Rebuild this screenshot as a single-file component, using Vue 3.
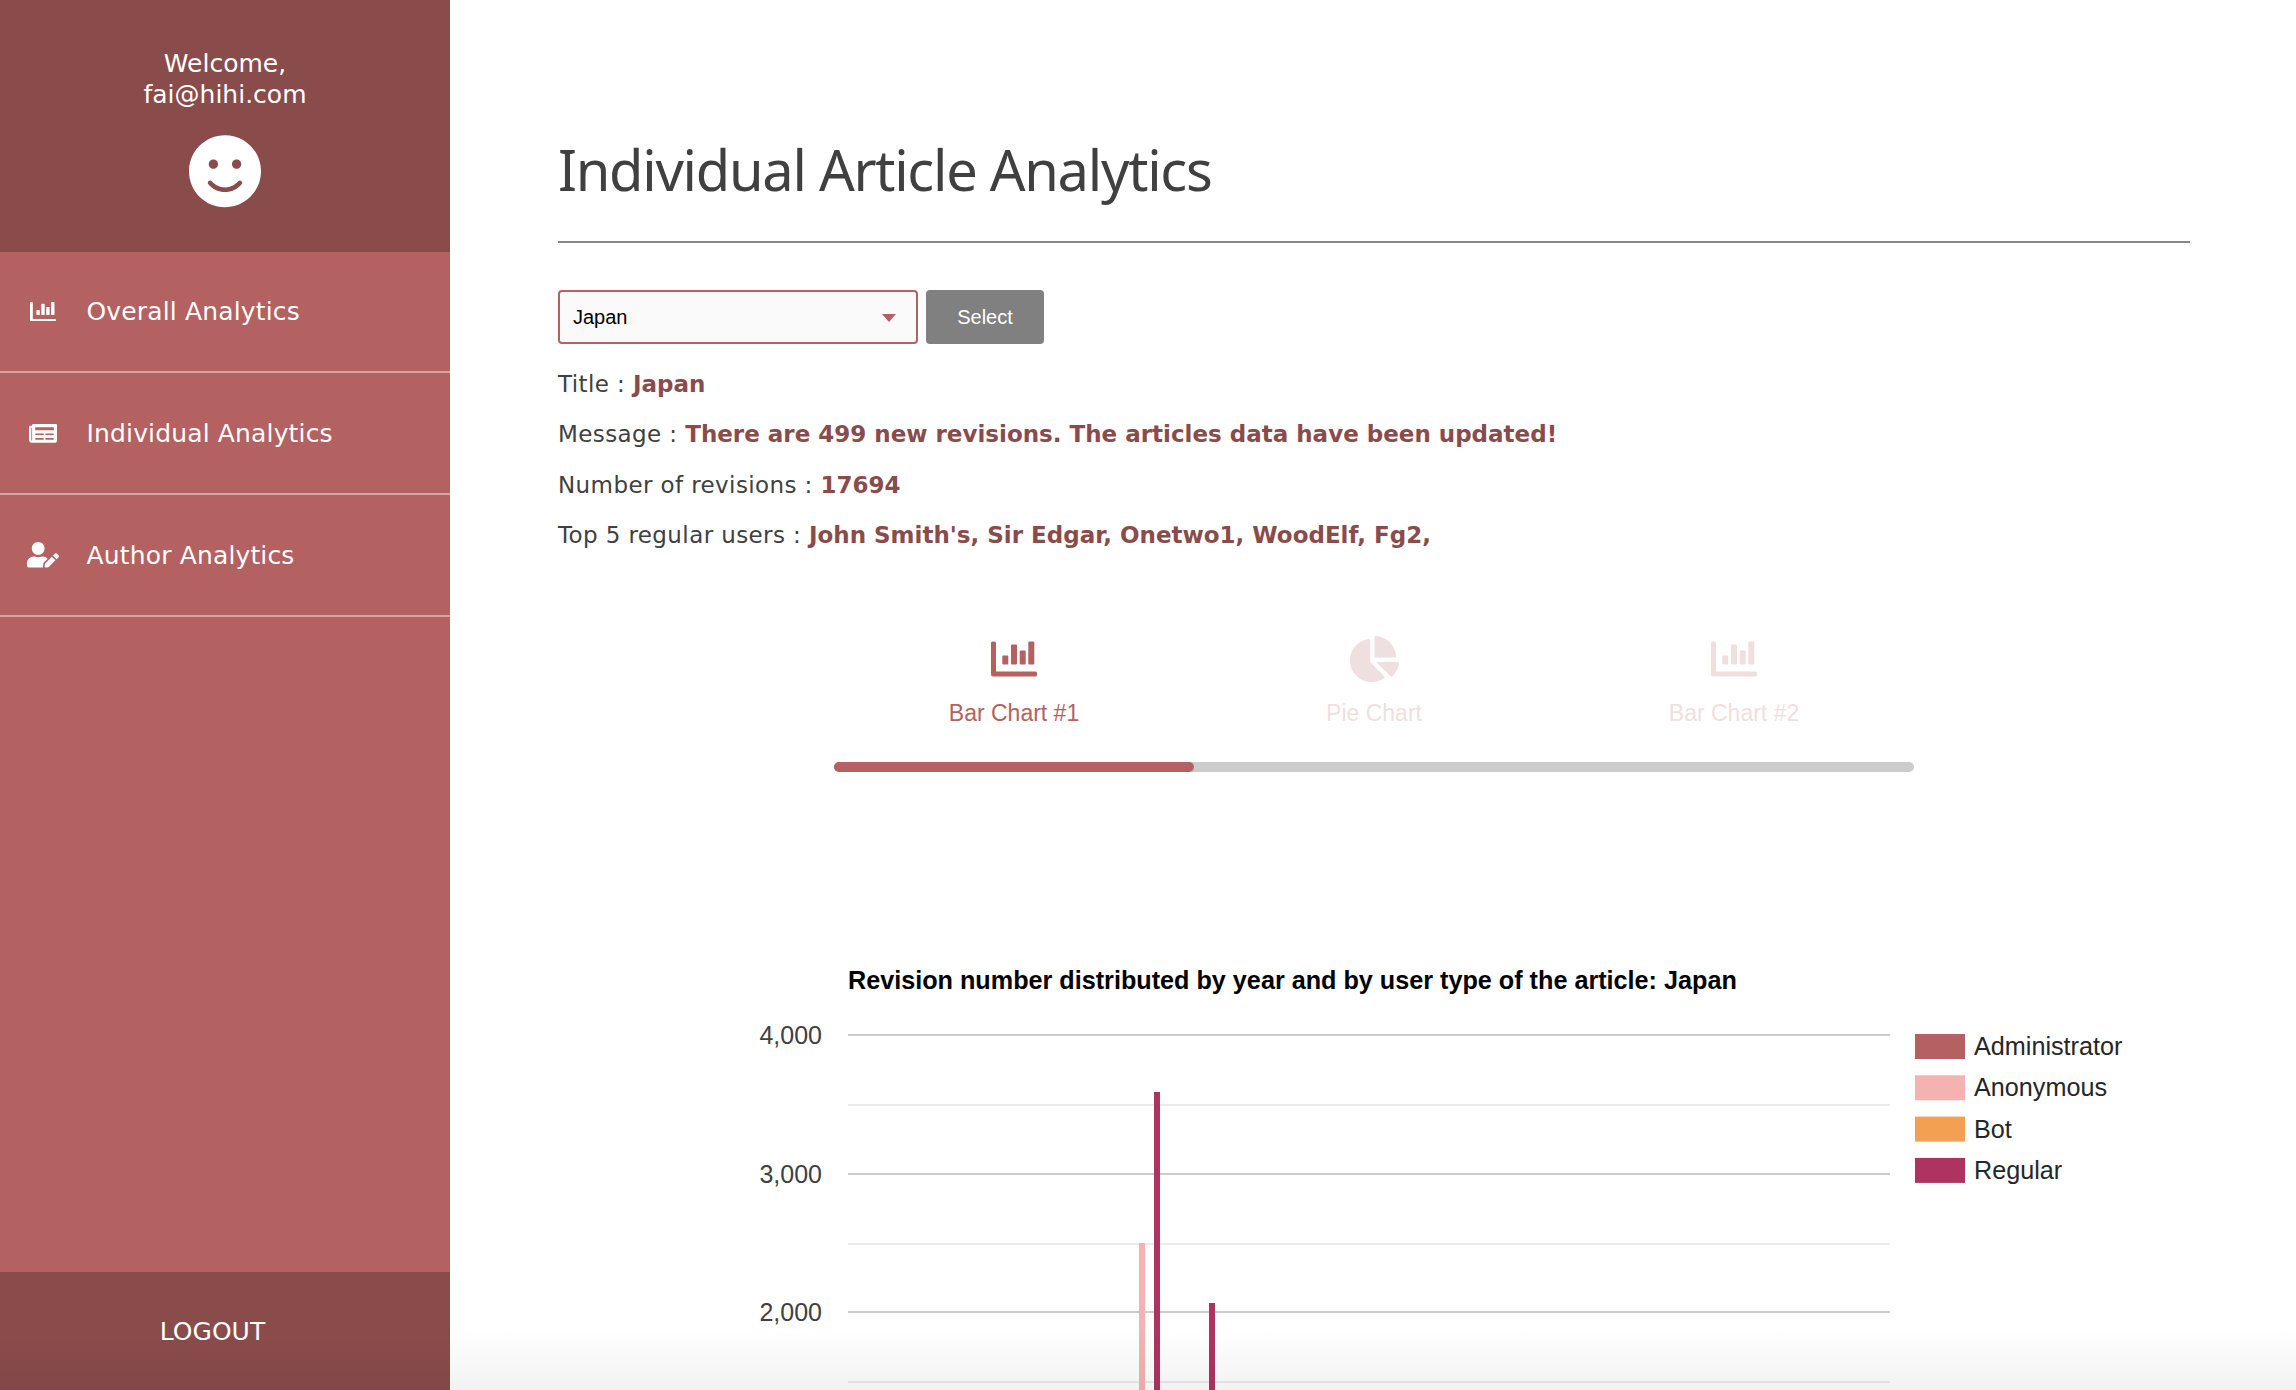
<template>
  <div class="app">
    <aside class="sidebar">
      <div class="profile">
        <p class="welcome">Welcome,<br />{{ email }}</p>
        <svg class="face" viewBox="0 0 496 512" fill="currentColor">
          <path d="M248 8C111 8 0 119 0 256s111 248 248 248 248-111 248-248S385 8 248 8zm80 168c17.7 0 32 14.3 32 32s-14.3 32-32 32-32-14.3-32-32 14.3-32 32-32zm-160 0c17.7 0 32 14.3 32 32s-14.3 32-32 32-32-14.3-32-32 14.3-32 32-32zm194.8 170.2C334.3 380.4 292.5 400 248 400s-86.3-19.6-114.8-53.8c-13.6-16.3 11-36.7 24.6-20.5 22.4 26.9 55.2 42.2 90.2 42.2s67.8-15.4 90.2-42.2c13.4-16.2 38.1 4.2 24.6 20.5z" />
        </svg>
      </div>
      <nav class="menu">
        <a v-for="item in menu" :key="item.label" class="menu-item">
          <span class="menu-icon">
            <svg :viewBox="item.box" fill="currentColor" :style="{ width: item.size + 'px' }"><path :d="item.path" /></svg>
          </span>
          {{ item.label }}
        </a>
      </nav>
      <div class="logout">LOGOUT</div>
    </aside>

    <main class="main">
      <h1 class="title">Individual Article Analytics</h1>
      <hr class="rule" />

      <div class="picker">
        <div class="select-wrap">
          <select class="select">
            <option>Japan</option>
          </select>
          <span class="caret"></span>
        </div>
        <button class="select-btn">Select</button>
      </div>

      <p v-for="row in facts" :key="row.label" class="fact">
        {{ row.label }} : <strong>{{ row.value }}</strong>
      </p>

      <section class="tabs">
        <div class="tab-row">
          <div v-for="(tab, i) in tabs" :key="tab.label" class="tab" :class="{ active: i === 0 }">
            <svg :viewBox="tab.box" fill="currentColor" class="tab-icon" :style="{ width: tab.size + 'px' }"><path :d="tab.path" /></svg>
            <span class="tab-label">{{ tab.label }}</span>
          </div>
        </div>
        <div class="track"><div class="fill"></div></div>
      </section>

      <svg class="chart" width="1632" height="500" viewBox="0 0 1632 500">
        <text x="290" y="30" class="chart-title">Revision number distributed by year and by user type of the article: Japan</text>
        <line
          v-for="(g, i) in grid"
          :key="g"
          x1="290"
          x2="1332"
          :y1="g"
          :y2="g"
          :stroke="i % 2 ? '#ebebeb' : '#cccccc'"
          stroke-width="2"
        />
        <text v-for="t in ticks" :key="t.label" x="264" :y="t.y + 9" text-anchor="end" class="tick">{{ t.label }}</text>
        <rect v-for="b in bars" :key="b.x" :x="b.x" :y="b.y" width="6" :height="500 - b.y" :fill="b.color" />
        <g v-for="(l, i) in legend" :key="l.label">
          <rect x="1357" :y="75 + i * 41.3" width="50" height="25" :fill="l.color" />
          <text x="1416" :y="96 + i * 41.3" class="legend">{{ l.label }}</text>
        </g>
      </svg>
    </main>

    <div class="fade"></div>
  </div>
</template>

<script setup>
const email = 'fai@hihi.com'

// rounded rectangle as a path piece, for the thick bar chart glyph
const rr = (x, y, w, h) =>
  `M${x + 1} ${y}h${w - 2}a1 1 0 0 1 1 1v${h - 2}a1 1 0 0 1-1 1h${2 - w}a1 1 0 0 1-1-1v${2 - h}a1 1 0 0 1 1-1z`

const barPath =
  'M1.5 0h2a1.5 1.5 0 0 1 1.5 1.5V30h39.5a1.5 1.5 0 0 1 1.5 1.5v2a1.5 1.5 0 0 1-1.5 1.5H2a2 2 0 0 1-2-2V1.5A1.5 1.5 0 0 1 1.5 0z' +
  rr(11.3, 14, 6, 9) + rr(20, 3, 6, 20) + rr(28.7, 9, 6, 14) + rr(37.3, 0, 6, 23)
const piePath = 'M527.79 288H290.5l158.03 158.03c6.04 6.04 15.98 6.53 22.19.68 38.7-36.46 65.32-85.61 73.13-140.86 1.34-9.46-6.51-17.85-16.06-17.85zm-15.83-64.8C503.72 103.74 408.26 8.28 288.8.04 279.68-.59 272 7.1 272 16.24V240h223.77c9.14 0 16.82-7.68 16.19-16.8zM224 288V50.71c0-9.55-8.39-17.4-17.84-16.06C86.99 51.49-4.1 155.6.14 280.37 4.5 408.51 114.83 513.59 243.03 511.98c50.4-.63 96.97-16.87 135.26-44.03 7.9-5.6 8.42-17.23 1.57-24.08L224 288z'
const paperPath = 'M552 64H88c-13.255 0-24 10.745-24 24v8H24c-13.255 0-24 10.745-24 24v272c0 30.928 25.072 56 56 56h472c26.51 0 48-21.49 48-48V88c0-13.255-10.745-24-24-24zM56 400a8 8 0 0 1-8-8V144h16v248a8 8 0 0 1-8 8zm236-16H140c-6.627 0-12-5.373-12-12v-8c0-6.627 5.373-12 12-12h152c6.627 0 12 5.373 12 12v8c0 6.627-5.373 12-12 12zm208 0H348c-6.627 0-12-5.373-12-12v-8c0-6.627 5.373-12 12-12h152c6.627 0 12 5.373 12 12v8c0 6.627-5.373 12-12 12zm-208-96H140c-6.627 0-12-5.373-12-12v-8c0-6.627 5.373-12 12-12h152c6.627 0 12 5.373 12 12v8c0 6.627-5.373 12-12 12zm208 0H348c-6.627 0-12-5.373-12-12v-8c0-6.627 5.373-12 12-12h152c6.627 0 12 5.373 12 12v8c0 6.627-5.373 12-12 12zm0-96H140c-6.627 0-12-5.373-12-12v-40c0-6.627 5.373-12 12-12h360c6.627 0 12 5.373 12 12v40c0 6.627-5.373 12-12 12z'
const userPath = 'M224 256c70.7 0 128-57.3 128-128S294.7 0 224 0 96 57.3 96 128s57.3 128 128 128zm89.6 32h-16.7c-22.2 10.2-46.9 16-72.9 16s-50.6-5.8-72.9-16h-16.7C60.2 288 0 348.2 0 422.4V464c0 26.5 21.5 48 48 48h274.9c-2.4-6.8-3.4-14-2.6-21.3l6.8-60.9 1.2-11.1 7.9-7.9 77.3-77.3c-24.5-27.7-60-45.5-99.9-45.5zm45.3 145.3l-6.8 61c-1.1 10.2 7.5 18.8 17.6 17.6l60.9-6.8 137.9-137.9-71.7-71.7-138 137.8zM633 268.9L595.1 231c-9.3-9.3-24.5-9.3-33.8 0l-37.8 37.8-4.1 4.1 71.8 71.7 41.8-41.8c9.3-9.4 9.3-24.5 0-33.9z'

const menu = [
  { label: 'Overall Analytics', box: '0 0 46 35', size: 26, path: barPath },
  { label: 'Individual Analytics', box: '0 0 576 512', size: 28, path: paperPath },
  { label: 'Author Analytics', box: '0 0 640 512', size: 32, path: userPath }
]

const facts = [
  { label: 'Title', value: 'Japan' },
  { label: 'Message', value: 'There are 499 new revisions. The articles data have been updated!' },
  { label: 'Number of revisions', value: '17694' },
  { label: 'Top 5 regular users', value: "John Smith's, Sir Edgar, Onetwo1, WoodElf, Fg2," }
]

const tabs = [
  { label: 'Bar Chart #1', box: '0 0 46 35', size: 46, path: barPath },
  { label: 'Pie Chart', box: '0 0 544 512', size: 49, path: piePath },
  { label: 'Bar Chart #2', box: '0 0 46 35', size: 46, path: barPath }
]

// chart coordinates, origin at the svg corner
const grid = [76, 146, 215, 285, 353, 423]
const ticks = [
  { label: '4,000', y: 76 },
  { label: '3,000', y: 215 },
  { label: '2,000', y: 353 }
]
const bars = [
  { x: 581, y: 284, color: '#f4b3b0' },
  { x: 596, y: 133, color: '#ae3360' },
  { x: 651, y: 344, color: '#ae3360' }
]
const legend = [
  { label: 'Administrator', color: '#b36161' },
  { label: 'Anonymous', color: '#f4b3b0' },
  { label: 'Bot', color: '#f4a053' },
  { label: 'Regular', color: '#ae3360' }
]
</script>

<style>
html,
body {
  margin: 0;
  height: 100%;
  overflow: hidden;
  background: #fff;
}
</style>

<style scoped>
.app {
  position: relative;
  display: flex;
  height: 100vh;
  overflow: hidden;
  font-family: "DejaVu Sans", Verdana, sans-serif;
}

/* sidebar */
.sidebar {
  width: 450px;
  flex-shrink: 0;
  display: flex;
  flex-direction: column;
  background: #b36161;
  color: #fff;
}

.profile {
  height: 252px;
  box-sizing: border-box;
  padding-top: 48px;
  background: #8a4b4b;
  text-align: center;
}

.welcome {
  margin: 0;
  font-size: 25px;
  line-height: 31px;
}

.face {
  display: block;
  width: 72px;
  margin: 24px auto 0;
}

.menu {
  flex: 1;
}

.menu-item {
  display: flex;
  align-items: center;
  box-sizing: border-box;
  height: 122px;
  border-bottom: 2px solid #d4a5a5;
  font-size: 25px;
  letter-spacing: 0.15px;
}

.menu-item:first-child {
  height: 121px;
}

.menu-icon {
  width: 86.5px;
  display: flex;
  justify-content: center;
  flex-shrink: 0;
}

.menu-icon svg {
  display: block;
}

.logout {
  height: 118px;
  box-sizing: border-box;
  background: #8a4b4b;
  padding-right: 25px;
  display: flex;
  align-items: center;
  justify-content: center;
  font-size: 25px;
}

/* main */
.main {
  flex: 1;
  min-width: 0;
  padding: 0 106px 0 108px;
}

.title {
  margin: 0;
  padding-top: 129px;
  font-family: "Noto Sans", "Open Sans", sans-serif;
  font-size: 56px;
  line-height: 80px;
  letter-spacing: -1.27px;
  font-weight: 400;
  color: #404040;
}

.rule {
  margin: 32px 0 0;
  border: 0;
  height: 2px;
  background: #888;
}

.picker {
  display: flex;
  gap: 8px;
  margin-top: 47px;
}

.select-wrap {
  position: relative;
  width: 360px;
  height: 54px;
}

.select {
  width: 100%;
  height: 100%;
  box-sizing: border-box;
  padding: 0 13px;
  appearance: none;
  border: 2px solid #b36161;
  border-radius: 4px;
  background: #fafafa;
  font-family: "Liberation Sans", Arial, sans-serif;
  font-size: 20px;
  color: #000;
}

.caret {
  position: absolute;
  right: 22px;
  top: 24px;
  border-left: 7px solid transparent;
  border-right: 7px solid transparent;
  border-top: 8px solid #b36161;
}

.select-btn {
  width: 118px;
  height: 54px;
  border: 0;
  border-radius: 4px;
  background: #808080;
  color: #fff;
  font-family: "Liberation Sans", Arial, sans-serif;
  font-size: 20px;
}

.fact {
  margin: 0;
  height: 50.5px;
  line-height: 50.5px;
  font-size: 23px;
  letter-spacing: 0.4px;
  color: #404040;
}

.fact:first-of-type {
  margin-top: 14.5px;
}

.fact strong {
  color: #8a4b4b;
  letter-spacing: 0;
}

.tabs {
  width: 1080px;
  margin: 74.5px 0 0 276px;
}

.tab-row {
  display: flex;
}

.tab {
  flex: 1;
  display: flex;
  flex-direction: column;
  align-items: center;
  color: #f0dfdf;
}

.tab.active {
  color: #b36161;
}

.tab-icon {
  display: block;
  height: 48px;
}

.tab-label {
  margin-top: 16px;
  font-family: "Liberation Sans", Arial, sans-serif;
  font-size: 23px;
  line-height: 28px;
}

.track {
  margin-top: 35px;
  height: 10px;
  border-radius: 5px;
  background: #cccccc;
}

.fill {
  width: 360px;
  height: 100%;
  border-radius: 5px;
  background: #b36161;
}

.chart {
  display: block;
  margin: 187px 0 0;
  font-family: "Liberation Sans", Arial, sans-serif;
}

.chart-title {
  font-size: 25.2px;
  font-weight: 700;
  fill: #000;
}

.tick {
  font-size: 25px;
  fill: #404040;
}

.legend {
  font-size: 25.2px;
  fill: #262626;
}

/* bottom edge shadow of the window */
.fade {
  position: absolute;
  left: 0;
  right: 0;
  bottom: 0;
  height: 60px;
  background: linear-gradient(rgba(0, 0, 0, 0), rgba(0, 0, 0, 0.05));
  pointer-events: none;
}
</style>
